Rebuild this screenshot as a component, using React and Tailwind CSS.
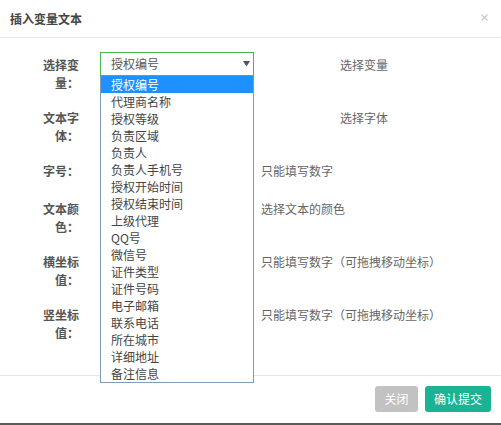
import { useState } from "react";

const OPTIONS = [
  "授权编号", "代理商名称", "授权等级", "负责区域", "负责人", "负责人手机号",
  "授权开始时间", "授权结束时间", "上级代理", "QQ号", "微信号", "证件类型",
  "证件号码", "电子邮箱", "联系电话", "所在城市", "详细地址", "备注信息",
];

// label, help text, row height, help offset
const ROWS = [
  { label: "选择变量：", help: "选择变量",                       h: "h-[53px]", gap: "ml-[86px]" },
  { label: "文本字体：", help: "选择字体",                       h: "h-[53px]", gap: "ml-[86px]" },
  { label: "字号：",     help: "只能填写数字",                   h: "h-[38px]", gap: "ml-[7px]" },
  { label: "文本颜色：", help: "选择文本的颜色",                 h: "h-[53px]", gap: "ml-[7px]" },
  { label: "横坐标值：", help: "只能填写数字（可拖拽移动坐标）", h: "h-[53px]", gap: "ml-[7px]" },
  { label: "竖坐标值：", help: "只能填写数字（可拖拽移动坐标）", h: "h-[53px]", gap: "ml-[7px]" },
];

function VarSelect() {
  const [value] = useState(OPTIONS[0]);
  return (
    <div className="relative w-[154px]">
      <div className="h-[24px] border border-[#4cb84c] bg-white flex items-center justify-between pl-[10px] pr-[3px] text-[12px] text-[#555] leading-[18px]">
        <span>{value}</span>
        <svg width="7" height="6" viewBox="0 0 7 6">
          <polygon points="0,0 7,0 3.5,5.5" fill="#555" />
        </svg>
      </div>
      {/* open native-style dropdown */}
      <ul className="absolute top-full left-0 w-full z-10 bg-white border-x border-b border-[#7f9db9]">
        {OPTIONS.map((o, i) => (
          <li
            key={o}
            className={
              "h-[17px] pl-[10px] text-[12px] leading-[17px] " +
              (i === 0 ? "bg-[#1e90ff] text-white" : "text-[#444]")
            }
          >
            {o}
          </li>
        ))}
      </ul>
    </div>
  );
}

export default function App() {
  return (
    <div className="w-[501px] h-[425px] bg-white flex flex-col font-['Noto_Sans_CJK_SC','Noto_Sans',sans-serif]">
      {/* Header */}
      <div className="h-[38px] shrink-0 border-b border-[#e5e5e5] flex items-center justify-between pl-[10px] pr-[13px]">
        <h4 className="text-[12px] font-bold text-[#444] leading-[18px]">插入变量文本</h4>
        <svg width="7" height="7" viewBox="0 0 7 7" className="mb-[2px]">
          <path d="M0.5 0.5 L6.5 6.5 M6.5 0.5 L0.5 6.5" stroke="#c8c8c8" strokeWidth="1.2" />
        </svg>
      </div>

      {/* Body */}
      <div className="flex-1 pt-[14px] pl-[39px]">
        {ROWS.map((r, i) => (
          <div key={r.label} className={"flex items-start " + r.h}>
            <label className="w-[40px] mt-[4px] text-right text-[12px] font-bold text-[#555] leading-[18px]">
              {r.label}
            </label>
            <div className="ml-[21px] w-[154px]">
              {i === 0 ? (
                <VarSelect />
              ) : (
                <div className="h-[24px] border border-[#e5e6e7] bg-white" />
              )}
            </div>
            <span className={"mt-[4px] text-[12px] text-[#666] leading-[18px] whitespace-nowrap " + r.gap}>
              {r.help}
            </span>
          </div>
        ))}
      </div>

      {/* Footer */}
      <div className="h-[48px] shrink-0 border-t border-[#e5e5e5] flex justify-end items-start gap-[7px] pt-[10px] pr-[10px]">
        <button className="w-[43px] h-[26px] rounded-[3px] bg-[#c2c2c2] text-white text-[12px]">关闭</button>
        <button className="w-[66px] h-[26px] rounded-[3px] bg-[#1ab394] text-white text-[12px]">确认提交</button>
      </div>
      <div className="h-[2px] shrink-0 bg-[#5a5a5a]" />
    </div>
  );
}
